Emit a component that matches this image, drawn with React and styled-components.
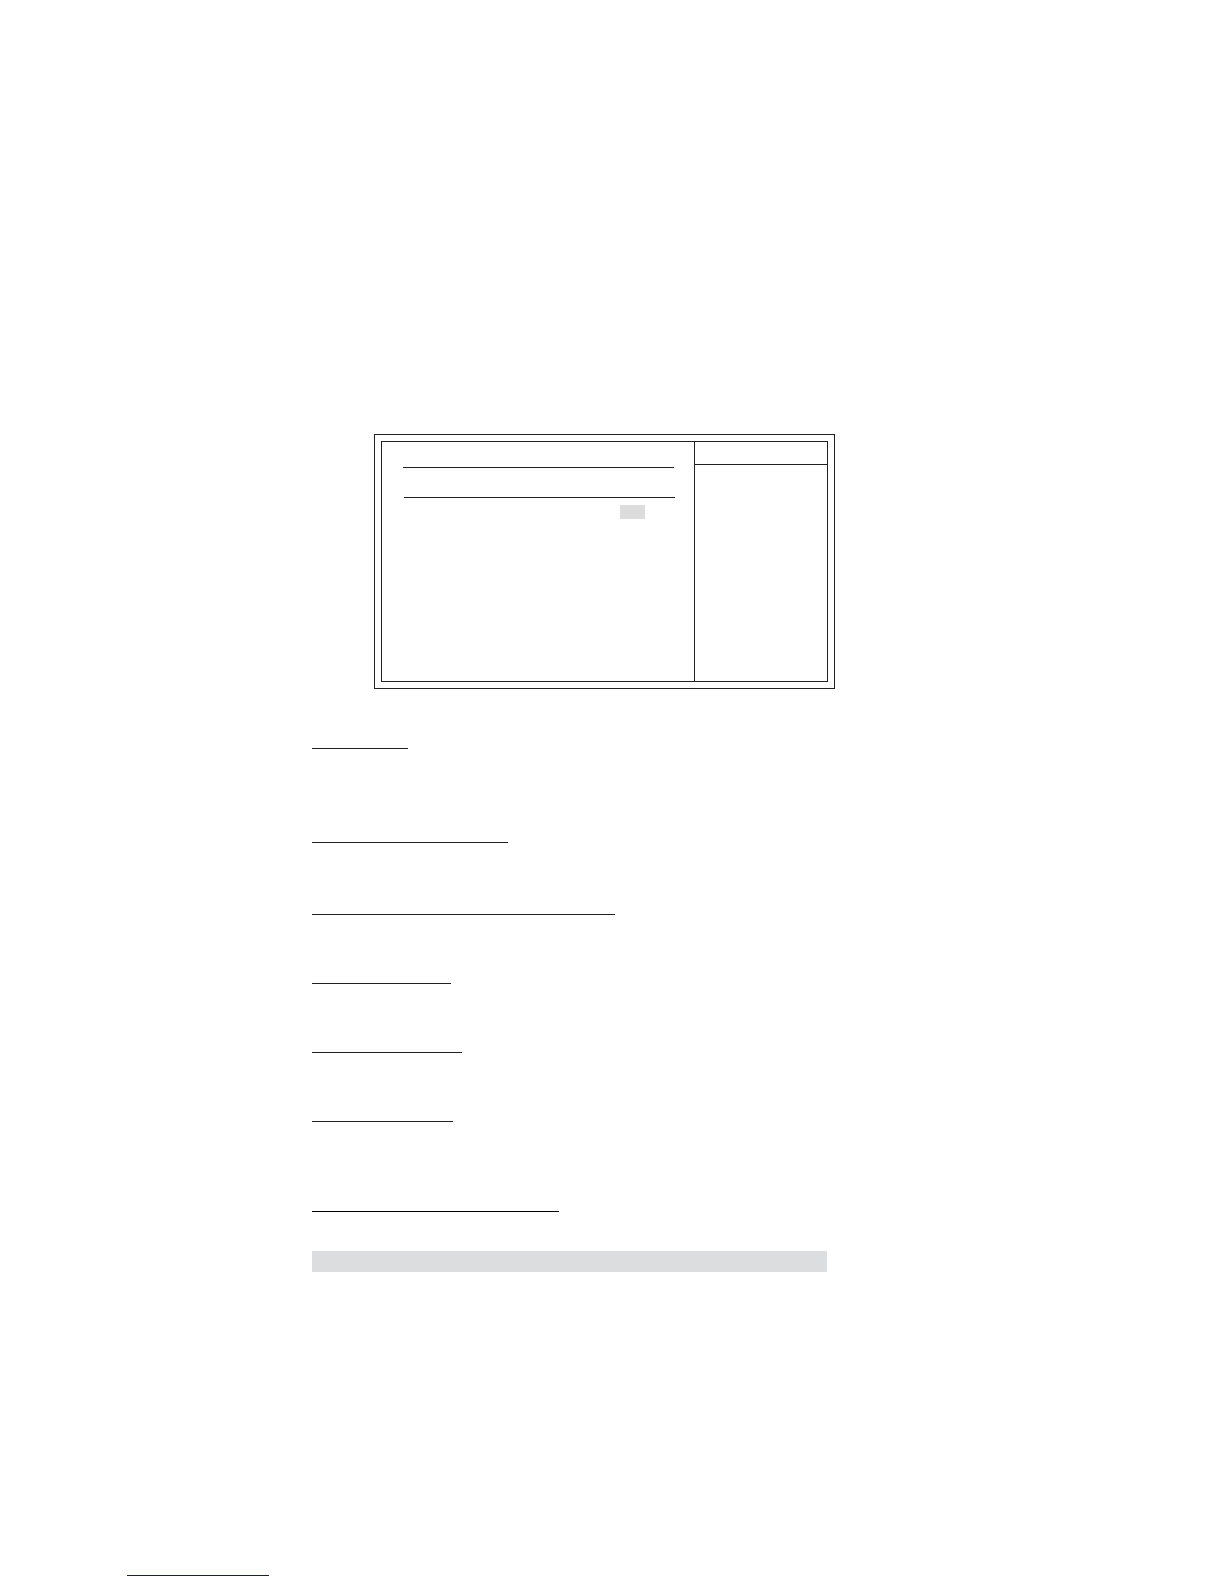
import React from 'react'
import styled, { createGlobalStyle, css } from 'styled-components'

const ink = '#231f20'
const shade = '#dcddde'

const GlobalStyle = createGlobalStyle`
body {
  margin: 0;
  background: #fff;
  font-family: 'Liberation Sans', Arial, sans-serif;
}
`
const line = css`
height: 1px;
margin: 0;
border: 0;
`
const Page = styled.div`
box-sizing: border-box;
min-height: 100vh;
display: flex;
flex-direction: column;
justify-content: space-between;
padding: 434px 24px 8px 127px;
`
const Main = styled.main`
max-width: 523px;
margin-left: 185px;
`
/*
setup screen: a double frame around two panes
*/
const Screen = styled.section`
margin-left: 62px;
padding: 6px;
border: 1px solid ${ink};
`
const Panes = styled.div`
display: grid;
grid-template-columns: minmax(0, 1fr) 133px;
min-height: 239px;
border: 1px solid ${ink};
`
const Settings = styled.div`
display: flex;
flex-direction: column;
padding: 25px 19px 0 21px;
`
const SettingsRule = styled.hr`
${line}
width: 271px;
max-width: 100%;
background: ${ink};
align-self: ${p => p.$end ? 'flex-end' : 'flex-start'};
margin-bottom: ${p => p.$end ? 7 : 29}px;
`
const Selected = styled.div`
width: 25px;
height: 14px;
margin-right: 30px;
align-self: flex-end;
background: #dcdcdc;
`
const Help = styled.aside`
border-left: 1px solid ${ink};
`
const HelpTitle = styled.header`
height: 22px;
border-bottom: 1px solid ${ink};
`
/*
one entry per setting, each starts with its own underline
*/
const Entries = styled.div`
padding: 59px 8px 0 0;
`
const Entry = styled.section`
min-height: ${p => p.$height}px;
`
const Underline = styled.hr`
${line}
width: ${p => p.$width}px;
max-width: 100%;
background: ${p => p.$color || ink};
`
const Bar = styled.div`
height: 21px;
background: ${shade};
`
const Footer = styled.footer`
padding-top: 24px;
`
const entries = [
  { width: 96, height: 94 },
  { width: 196, height: 72 },
  { width: 303, height: 69 },
  { width: 139, height: 69 },
  { width: 150, height: 69 },
  { width: 141, height: 90 },
  { width: 247, height: 40, color: '#000' },
]

export default () =>
  <Page>
    <GlobalStyle />
    <Main>
      <Screen>
        <Panes>
          <Settings>
            <SettingsRule />
            <SettingsRule $end />
            <Selected />
          </Settings>
          <Help>
            <HelpTitle />
          </Help>
        </Panes>
      </Screen>
      <Entries>
        {entries.map(({ width, height, color }, i) =>
          <Entry key={i} $height={height}>
            <Underline $width={width} $color={color} />
          </Entry>
        )}
        <Bar />
      </Entries>
    </Main>
    <Footer>
      <Underline $width={142} $color='#14148c' />
    </Footer>
  </Page>
